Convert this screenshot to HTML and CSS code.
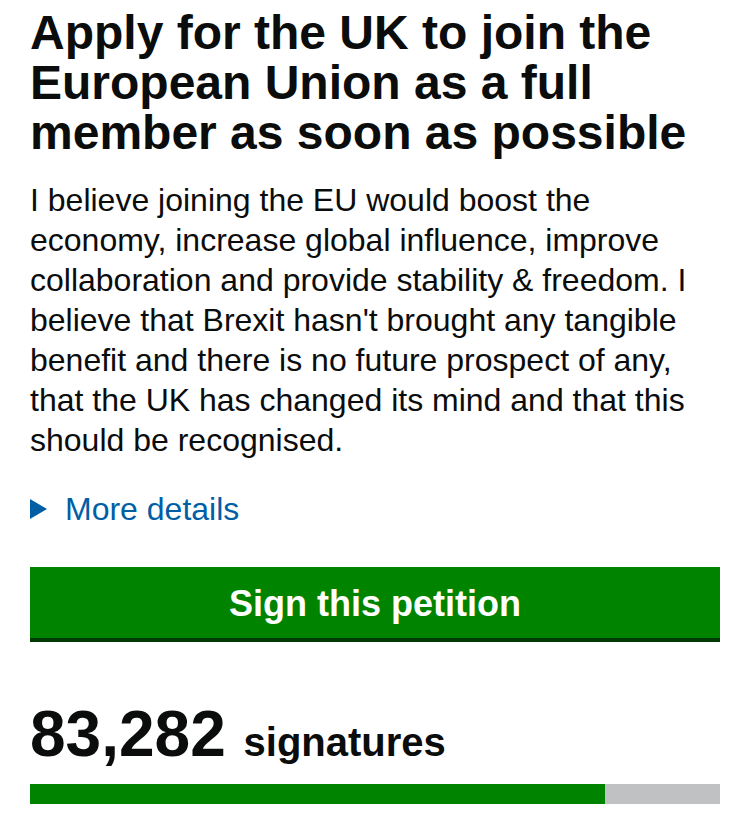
FILE: index.html
```html
<!DOCTYPE html>
<html lang="en">
<head>
    <meta charset="UTF-8">
    <meta name="viewport" content="width=device-width, initial-scale=1.0">
    <title>Apply for the UK to join the European Union as a full member as soon as possible</title>
    <link rel="stylesheet" href="styles.css">
</head>
<body>
    <main class="petition">
        <h1>Apply for the UK to join the European Union as a full member as soon as possible</h1>
        <p class="summary">I believe joining the EU would boost the economy, increase global influence, improve collaboration and provide stability &amp; freedom. I believe that Brexit hasn't brought any tangible benefit and there is no future prospect of any, that the UK has changed its mind and that this should be recognised.</p>

        <details class="more-details">
            <summary>
                <svg class="arrow" width="17" height="20" viewBox="0 0 17 20" aria-hidden="true">
                    <polygon points="0,0 17,10 0,20" fill="#005ea5"/>
                </svg>
                <span>More details</span>
            </summary>
        </details>

        <a class="button" href="#">Sign this petition</a>

        <p class="signature-count"><span class="count">83,282</span> <span class="label">signatures</span></p>
        <div class="progress">
            <div class="progress-bar" style="width: 83.282%"></div>
        </div>
    </main>
</body>
</html>
```

FILE: styles.css
```css
body {
    margin: 0;
    padding: 0;
    background-color: #ffffff;
    color: #0b0c0c;
    font-family: "Liberation Sans", Arial, Helvetica, sans-serif;
}

.petition {
    padding: 8px 30px 0;
}

h1 {
    margin: 0;
    font-size: 48px;
    line-height: 50px;
    font-weight: bold;
}

.summary {
    margin: 22px 0 0;
    font-size: 32px;
    line-height: 40px;
}

.more-details {
    margin-top: 29px;
}

.more-details summary {
    display: flex;
    align-items: center;
    gap: 18px;
    list-style: none;
    cursor: pointer;
    color: #005ea5;
    font-size: 32px;
    line-height: 40px;
}

.more-details summary::-webkit-details-marker {
    display: none;
}

.arrow {
    display: block;
    flex-shrink: 0;
}

.button {
    display: block;
    margin-top: 38px;
    padding: 17px 0 14px;
    background-color: #008400;
    box-shadow: 0 4px 0 #003a00;
    color: #ffffff;
    text-align: center;
    text-decoration: none;
    font-size: 36px;
    line-height: 40px;
    font-weight: bold;
}

.signature-count {
    margin: 64px 0 0;
    font-size: 64px;
    line-height: 64px;
    font-weight: bold;
}

.signature-count .label {
    font-size: 40px;
    line-height: 1;
}

.progress {
    margin-top: 18px;
    height: 20px;
    background-color: #bfc1c3;
}

.progress-bar {
    height: 100%;
    background-color: #008400;
}
```
